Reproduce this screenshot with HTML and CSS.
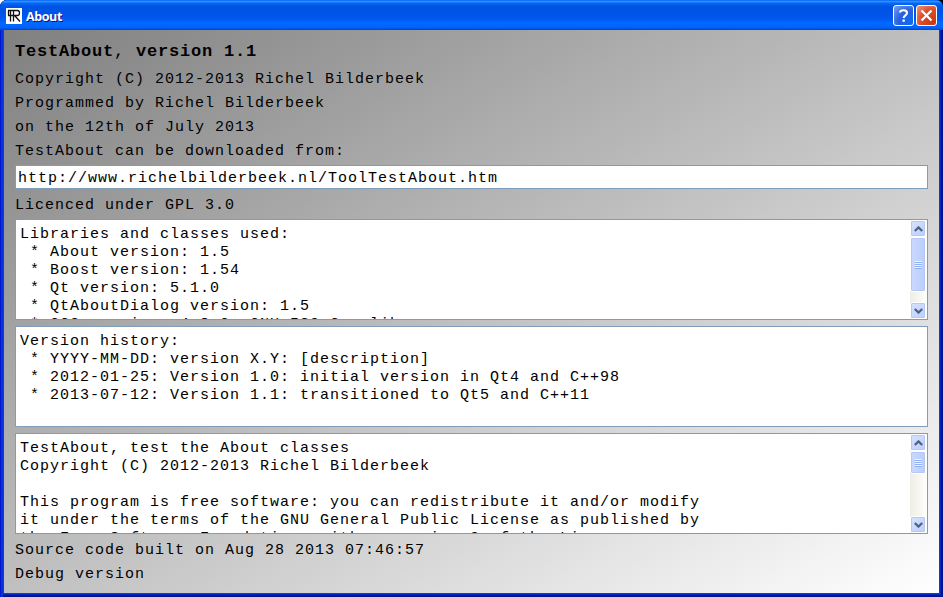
FILE: index.html
```html
<!DOCTYPE html>
<html lang="en">
<head>
<meta charset="utf-8">
<title>About</title>
<link rel="stylesheet" href="styles.css">
</head>
<body>
<div class="window">
  <header class="titlebar">
    <svg class="logo" width="16" height="16" viewBox="0 0 16 16"><path fill="#fff" d="M0 0h16v16H0z"/><path fill="none" stroke="#111" stroke-width="1.300" d="M2 2.500h9.500q2 0 2 2.500t-2 2.500H2M4.500 2.500v11M7.500 2.500v11M2.500 2.500v5M8.500 7.500l5.500 6"/></svg>
    <h1 class="caption">About</h1>
    <button class="tbtn help" aria-label="Help"><svg width="19" height="19" viewBox="0 0 19 19"><path d="M6 6.500C6.300 3.700 13 3.300 13 7c0 2.300-3.300 2.500-3.300 5" fill="none" stroke="#fff" stroke-width="2.100"/><path fill="#fff" d="M8.500 13.500h2.300v2.200H8.500z"/></svg></button>
    <button class="tbtn close" aria-label="Close"><svg width="19" height="19" viewBox="0 0 19 19"><path d="M4.500 4.500l10 10M14.500 4.500l-10 10" stroke="#fff" stroke-width="2.300"/></svg></button>
  </header>
  <main class="client">
    <h2 class="title">TestAbout<span class="light">,</span> version 1.1</h2>
    <p class="label">Copyright (C) 2012-2013 Richel Bilderbeek</p>
    <p class="label">Programmed by Richel Bilderbeek</p>
    <p class="label">on the 12th of July 2013</p>
    <p class="label">TestAbout can be downloaded from:</p>
    <div class="field">http://www.richelbilderbeek.nl/ToolTestAbout.htm</div>
    <p class="label licence">Licenced under GPL 3.0</p>
    <section class="box">
      <pre class="text">Libraries and classes used:
 * About version: 1.5
 * Boost version: 1.54
 * Qt version: 5.1.0
 * QtAboutDialog version: 1.5
 * GCC version: 4.8.0, GNU ISO C++ library</pre>
      <div class="scroll">
        <div class="sbtn"><svg width="9" height="6" viewBox="0 0 9 6"><path d="M.8 5l3.700-3.600L8.200 5" fill="none" stroke="#4d6185" stroke-width="2.200"/></svg></div>
        <div class="thumb tall"><i class="grip"></i></div>
        <div class="sbtn end"><svg width="9" height="6" viewBox="0 0 9 6"><path d="M.8 1l3.700 3.600L8.200 1" fill="none" stroke="#4d6185" stroke-width="2.200"/></svg></div>
      </div>
    </section>
    <section class="box">
      <pre class="text">Version history:
 * YYYY-MM-DD: version X.Y: [description]
 * 2012-01-25: Version 1.0: initial version in Qt4 and C++98
 * 2013-07-12: Version 1.1: transitioned to Qt5 and C++11</pre>
    </section>
    <section class="box">
      <pre class="text">TestAbout, test the About classes
Copyright (C) 2012-2013 Richel Bilderbeek

This program is free software: you can redistribute it and/or modify
it under the terms of the GNU General Public License as published by
the Free Software Foundation, either version 3 of the License, or</pre>
      <div class="scroll">
        <div class="sbtn"><svg width="9" height="6" viewBox="0 0 9 6"><path d="M.8 5l3.700-3.600L8.200 5" fill="none" stroke="#4d6185" stroke-width="2.200"/></svg></div>
        <div class="thumb short"><i class="grip"></i></div>
        <div class="sbtn end"><svg width="9" height="6" viewBox="0 0 9 6"><path d="M.8 1l3.700 3.600L8.200 1" fill="none" stroke="#4d6185" stroke-width="2.200"/></svg></div>
      </div>
    </section>
    <p class="label built">Source code built on Aug 28 2013 07:46:57</p>
    <p class="label">Debug version</p>
  </main>
</div>
</body>
</html>
```
FILE: styles.css
```css
* { box-sizing: border-box; margin: 0; padding: 0; }
body { width: 943px; height: 597px; overflow: hidden; background: linear-gradient(90deg, #fff 50%, #000 50%); }
.window {
  width: 943px; height: 597px; display: flex; flex-direction: column;
  border-radius: 7px 7px 0 0; padding: 0 4px 4px; overflow: hidden;
  background: #0042e0;
  box-shadow: inset 1px 0 #0019cf, inset 3px 0 #0831d9, inset -2px -2px #00138c, inset -3px -3px #0029c4;
}
.titlebar {
  height: 30px; flex: none; margin: 0 -4px; padding: 1px 6px 0; display: flex; align-items: center;
  background: linear-gradient(#0058ee 0, #3593ff 4%, #288eff 6%, #127dff 8%, #036ffc 10%, #0262ee 14%, #0057e5 20%, #0054e3 24%, #0055eb 56%, #005bf5 66%, #026afe 76%, #0066ff 86%, #0062f6 92%, #0043cf 100%);
}
.logo { flex: none; }
.caption {
  flex: 1; padding: 2px 0 0 4px; font: bold 12.5px/16px "Open Sans", sans-serif;
  letter-spacing: -.4px; color: #fff; text-shadow: 1px 1px #0f1089;
}
.tbtn {
  width: 21px; height: 21px; margin-left: 2px; border: 1px solid #fff; border-radius: 3px;
  display: flex; align-items: center; justify-content: center;
}
.help { background: radial-gradient(circle at 85% 85%, #0a6cf5, #2a5fdc 50%, #7d9ff0); }
.close { background: radial-gradient(circle at 85% 85%, #c93a10, #dd4d28 55%, #f0977c); }
.client {
  flex: 1; min-height: 0; padding: 10px 11px 0; display: flex; flex-direction: column;
  background: linear-gradient(to bottom right, #808080, #fff);
  font: 15px/18px "Liberation Mono", monospace; letter-spacing: 1px; color: #000;
}
.title { font-size: 17px; line-height: 24px; letter-spacing: .8px; margin-bottom: 3px; }
.light { font-weight: normal; }
.label { height: 24px; line-height: 25px; flex: none; white-space: pre; }
.field { height: 24px; flex: none; margin: 2px 0 3px; padding: 0 2px; border: 1px solid #7f9db9; background: #fff; line-height: 25px; }
.box {
  height: 101px; flex: none; margin-bottom: 6px; border: 1px solid #7f9db9; background: #fff;
  display: flex; overflow: hidden;
}
.licence { margin-bottom: 3px; line-height: 27px; }
.text { flex: 1; height: 99px; overflow: hidden; padding: 6px 4px 0; font: inherit; white-space: pre; }
.scroll {
  width: 17px; flex: none; display: flex; flex-direction: column;
  background: linear-gradient(90deg, #eeede5, #fefefb);
}
.sbtn, .thumb {
  flex: none; margin-right: 1px; border: 1px solid #fff; border-radius: 2px;
  display: flex; align-items: center; justify-content: center;
  box-shadow: inset 0 0 0 1px #b5c8f6;
  background: linear-gradient(135deg, #d8e3ff, #bacdfb);
}
.sbtn { height: 17px; }
.thumb { background: linear-gradient(90deg, #cbd9ff, #bbcdfb); }
.tall { height: 55px; }
.short { height: 23px; }
.end { margin-top: auto; }
.grip { width: 7px; height: 8px; background: repeating-linear-gradient(#eef4fe 0 1px, #8cb0f8 1px 2px); }
.built { margin-top: -2px; line-height: 26px; }
```
